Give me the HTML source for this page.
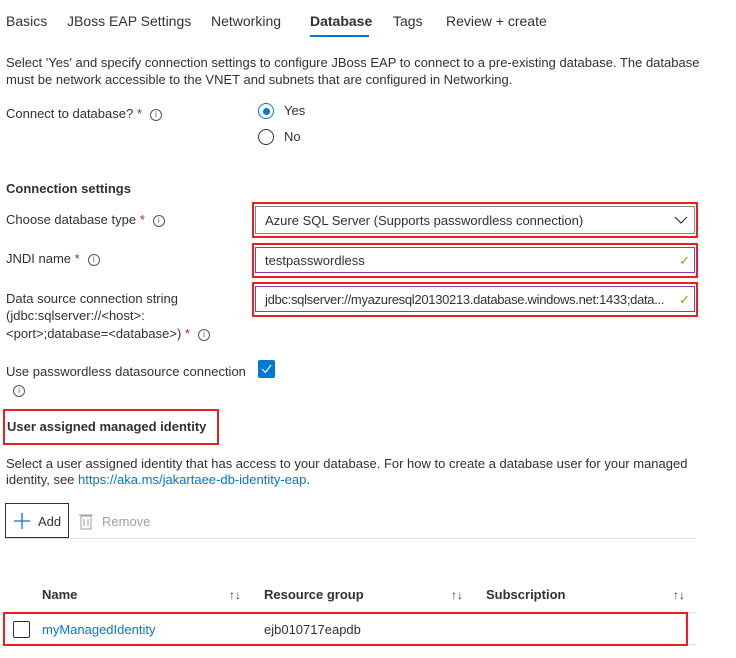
<!DOCTYPE html>
<html><head><style>
body{margin:0;width:736px;height:658px;background:#fff;font-family:"Liberation Sans",sans-serif;font-size:13px;color:#323130;position:relative;overflow:hidden}
.a{position:absolute;white-space:nowrap;line-height:16px}
.req{color:#a4262c}
.info{display:inline-block;width:10px;height:10px;border:1px solid #555;border-radius:50%;font-size:8px;line-height:10px;text-align:center;vertical-align:1px;margin-left:8px;color:#555}
.red{position:absolute;border:2px solid #e8211d;box-sizing:border-box}
.inp{position:absolute;box-sizing:border-box;background:#fff}
.ok{position:absolute;right:4px;top:5px;color:#6bb700;font-size:13px}
</style></head><body>
<div class="a" style="left:6px;top:13px;font-size:14px">Basics</div>
<div class="a" style="left:67px;top:13px;font-size:14px">JBoss EAP Settings</div>
<div class="a" style="left:211px;top:13px;font-size:14px">Networking</div>
<div class="a" style="left:310px;top:13px;font-size:14px;font-weight:bold">Database</div>
<div style="position:absolute;left:310px;top:35px;width:59px;height:2px;background:#0078d4"></div>
<div class="a" style="left:393px;top:13px;font-size:14px">Tags</div>
<div class="a" style="left:446px;top:13px;font-size:14px">Review + create</div>

<div class="a" style="left:6px;top:55px">Select 'Yes' and specify connection settings to configure JBoss EAP to connect to a pre-existing database. The database</div>
<div class="a" style="left:6px;top:72px">must be network accessible to the VNET and subnets that are configured in Networking.</div>

<div class="a" style="left:6px;top:106px">Connect to database? <span class="req">*</span><span class="info">i</span></div>
<div style="position:absolute;left:258px;top:103px;width:14px;height:14px;border:1.5px solid #0078d4;border-radius:50%"></div>
<div style="position:absolute;left:263px;top:108px;width:7px;height:7px;background:#0078d4;border-radius:50%"></div>
<div class="a" style="left:284px;top:103px">Yes</div>
<div style="position:absolute;left:258px;top:129px;width:14px;height:14px;border:1.5px solid #323130;border-radius:50%"></div>
<div class="a" style="left:284px;top:129px">No</div>

<div class="a" style="left:6px;top:181px;font-weight:bold">Connection settings</div>

<div class="a" style="left:6px;top:212px">Choose database type <span class="req">*</span><span class="info">i</span></div>
<div class="red" style="left:252px;top:202px;width:446px;height:36px"></div>
<div class="inp" style="left:255px;top:206px;width:440px;height:28px;border:1px solid #8a8886"><span class="a" style="left:9px;top:6px">Azure SQL Server (Supports passwordless connection)</span>
<svg style="position:absolute;right:6px;top:8px" width="14" height="10"><path d="M1 2 L7 8 L13 2" stroke="#323130" fill="none" stroke-width="1.2"/></svg></div>

<div class="a" style="left:6px;top:251px">JNDI name <span class="req">*</span><span class="info">i</span></div>
<div class="red" style="left:252px;top:243px;width:446px;height:35px"></div>
<div class="inp" style="left:255px;top:247px;width:440px;height:26px;border:1px solid #8a3bb0"><span class="a" style="left:9px;top:5px">testpasswordless</span><span class="ok">✓</span></div>

<div class="a" style="left:6px;top:291px">Data source connection string</div>
<div class="a" style="left:6px;top:308px">(jdbc:sqlserver://&lt;host&gt;:</div>
<div class="a" style="left:6px;top:326px">&lt;port&gt;;database=&lt;database&gt;) <span class="req">*</span><span class="info">i</span></div>
<div class="red" style="left:252px;top:282px;width:446px;height:35px"></div>
<div class="inp" style="left:255px;top:286px;width:440px;height:26px;border:1px solid #8a3bb0"><span class="a" style="left:9px;top:5px;letter-spacing:-0.3px">jdbc:sqlserver://myazuresql20130213.database.windows.net:1433;data...</span><span class="ok">✓</span></div>

<div class="a" style="left:6px;top:364px">Use passwordless datasource connection</div>
<div class="a" style="left:5px;top:382px"><span class="info">i</span></div>
<div style="position:absolute;left:258px;top:360px;width:17px;height:18px;background:#0078d4;border-radius:2px"><svg width="17" height="18"><path d="M4 9 L7.5 12.5 L13 5" stroke="#fff" fill="none" stroke-width="1.2"/></svg></div>

<div class="red" style="left:3px;top:409px;width:216px;height:36px"></div>
<div class="a" style="left:7px;top:419px;font-weight:bold">User assigned managed identity</div>

<div class="a" style="left:6px;top:456px">Select a user assigned identity that has access to your database. For how to create a database user for your managed</div>
<div class="a" style="left:6px;top:472px">identity, see <span style="color:#0078d4">https://aka.ms/jakartaee-db-identity-eap</span>.</div>

<div style="position:absolute;left:5px;top:503px;width:64px;height:35px;border:1px solid #323130;box-sizing:border-box"></div>
<svg style="position:absolute;left:14px;top:513px" width="16" height="16"><path d="M8 0 V16 M0 8 H16" stroke="#0078d4" stroke-width="1.3"/></svg>
<div class="a" style="left:38px;top:514px">Add</div>
<svg style="position:absolute;left:79px;top:513px" width="14" height="17"><rect x="2" y="3" width="10" height="13" fill="none" stroke="#a19f9d"/><line x1="0" y1="2" x2="14" y2="2" stroke="#a19f9d"/><line x1="5" y1="6" x2="5" y2="13" stroke="#a19f9d"/><line x1="9" y1="6" x2="9" y2="13" stroke="#a19f9d"/></svg>
<div class="a" style="left:102px;top:514px;color:#a19f9d">Remove</div>
<div style="position:absolute;left:5px;top:538px;width:691px;height:1px;background:#e1dfdd"></div>

<div class="a" style="left:42px;top:587px;font-weight:bold">Name</div>
<div class="a" style="left:229px;top:587px;font-size:12px">↑↓</div>
<div class="a" style="left:264px;top:587px;font-weight:bold">Resource group</div>
<div class="a" style="left:451px;top:587px;font-size:12px">↑↓</div>
<div class="a" style="left:486px;top:587px;font-weight:bold">Subscription</div>
<div class="a" style="left:673px;top:587px;font-size:12px">↑↓</div>
<div style="position:absolute;left:5px;top:612px;width:691px;height:1px;background:#e1dfdd"></div>
<div style="position:absolute;left:5px;top:644px;width:691px;height:1px;background:#e1dfdd"></div>
<div class="red" style="left:3px;top:612px;width:685px;height:34px"></div>
<div style="position:absolute;left:13px;top:621px;width:17px;height:17px;border:1px solid #323130;box-sizing:border-box;border-radius:2px"></div>
<div class="a" style="left:42px;top:622px;color:#0078d4">myManagedIdentity</div>
<div class="a" style="left:264px;top:622px">ejb010717eapdb</div>
</body></html>
